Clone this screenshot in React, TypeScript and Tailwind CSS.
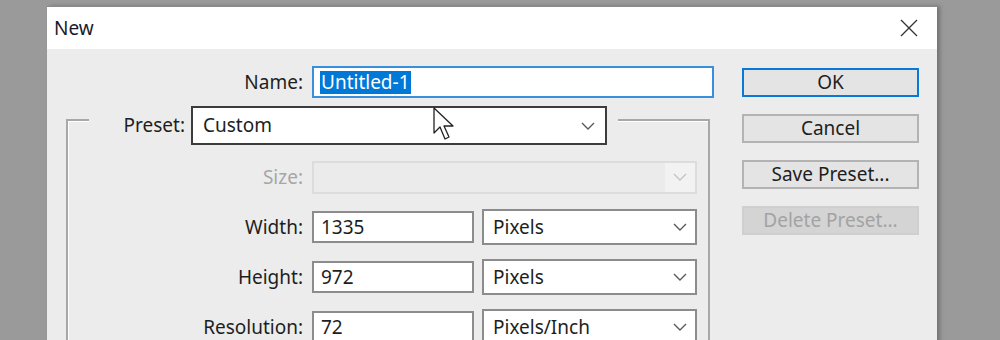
const font = { fontFamily: '"Noto Sans", "Open Sans", sans-serif' };

function Chevron({ color = "#5a5a5a" }: { color?: string }) {
  return (
    <svg width="14" height="8" viewBox="0 0 14 8" fill="none">
      <path d="M1 1l6 6 6-6" stroke={color} strokeWidth="1.4" />
    </svg>
  );
}

function Select({ value, className }: { value: string; className: string }) {
  return (
    <div className={`flex items-center justify-between bg-white border-2 border-[#8c8c8c] pl-[9px] pr-[8px] ${className}`}>
      <span>{value}</span>
      <Chevron />
    </div>
  );
}

function Field({ label, value, unit }: { label: string; value: string; unit: string }) {
  return (
    <div className="flex items-center h-[36px]">
      <div className="w-[235px] text-right">{label}</div>
      <div className="ml-[9px] w-[162px] h-[32px] bg-white border-2 border-[#8c8c8c] flex items-center pl-[7px]">{value}</div>
      <Select value={unit} className="ml-[8px] w-[215px] h-[36px]" />
    </div>
  );
}

function Btn({ children, primary, disabled }: { children: string; primary?: boolean; disabled?: boolean }) {
  return (
    <div
      className={`w-[177px] h-[29px] flex items-center justify-center border-2 ${
        primary ? "border-[#0a78d6]" : disabled ? "border-[#cfcfcf]" : "border-[#b3b3b3]"
      } ${disabled ? "bg-[#d4d4d4] text-[#a3a3a3]" : "bg-[#e4e4e4] text-[#1e1e1e]"}`}
    >
      {children}
    </div>
  );
}

export default function App() {
  return (
    <div className="h-[340px] bg-[#9a9a9a] overflow-hidden pt-[6px] text-[19px] text-[#1e1e1e]" style={font}>
      <div className="ml-[47px] w-[890px] h-[360px] shadow-[3px_0_4px_rgba(0,0,0,0.25)] border-t border-[#8a8a8a]">
        <div className="h-[42px] bg-white flex items-center justify-between pl-[7px] pr-[19px]">
          <span className="text-[19px] text-[#1a1a2a]">New</span>
          <svg width="18" height="18" viewBox="0 0 18 18" fill="none">
            <path d="M1 1l16 16M17 1L1 17" stroke="#333" strokeWidth="1.3" />
          </svg>
        </div>

        <div className="relative bg-[#ececec] h-full flex pt-[17px]">
          <div className="flex flex-col">
            <div className="flex items-center h-[32px]">
              <div className="w-[256px] text-right">Name:</div>
              <div className="ml-[9px] w-[402px] h-[32px] bg-white border-2 border-[#3a8fdd] flex items-center pl-[6px]">
                <span className="bg-[#0078d7] text-white px-[1px] leading-[23px]">Untitled-1</span>
              </div>
            </div>

            <div className="mt-[8px] ml-[19px] w-[644px]">
              <div className="flex h-[39px]">
                <div className="w-[23px] mt-[13px] border-t-2 border-l-2 border-[#a8a8a8] shadow-[inset_1px_1px_0_#fff]" />
                <div className="w-[96px] text-right self-center">Preset:</div>
                <div className="ml-[6px] w-[416px] h-[39px] bg-white border-2 border-[#3c3c3c] flex items-center justify-between pl-[10px] pr-[10px]">
                  <span>Custom</span>
                  <Chevron />
                </div>
                <div className="flex-1 ml-[11px] mt-[13px] border-t-2 border-r-2 border-[#a8a8a8] shadow-[inset_0_1px_0_#fff]" />
              </div>
              <div className="border-l-2 border-r-2 border-[#a8a8a8] shadow-[inset_1px_0_0_#fff] pt-[14px] flex flex-col gap-[14px] pb-[20px]">
                <div className="flex items-center h-[36px]">
                  <div className="w-[235px] text-right text-[#a6a6a6]">Size:</div>
                  <div className="ml-[9px] w-[385px] h-[33px] border-2 border-[#dcdcdc] bg-[#ebebeb] flex justify-end">
                    <div className="w-[30px] bg-[#f2f2f2] flex items-center justify-center">
                      <Chevron color="#c4c4c4" />
                    </div>
                  </div>
                </div>
                <Field label="Width:" value="1335" unit="Pixels" />
                <Field label="Height:" value="972" unit="Pixels" />
                <Field label="Resolution:" value="72" unit="Pixels/Inch" />
              </div>
            </div>
          </div>

          <div className="ml-auto mr-[18px] pt-[2px] flex flex-col gap-[17px]">
            <Btn primary>OK</Btn>
            <Btn>Cancel</Btn>
            <Btn>Save Preset...</Btn>
            <Btn disabled>Delete Preset...</Btn>
          </div>

          <svg className="absolute left-[386px] top-[58px]" width="24" height="36" viewBox="0 0 24 36">
            <path
              d="M1 1 L1 26 L7 20 L12 32 L16 30 L11 19 L20 19 Z"
              fill="#fff"
              stroke="#222"
              strokeWidth="1.3"
              strokeLinejoin="round"
            />
          </svg>
        </div>
      </div>
    </div>
  );
}
